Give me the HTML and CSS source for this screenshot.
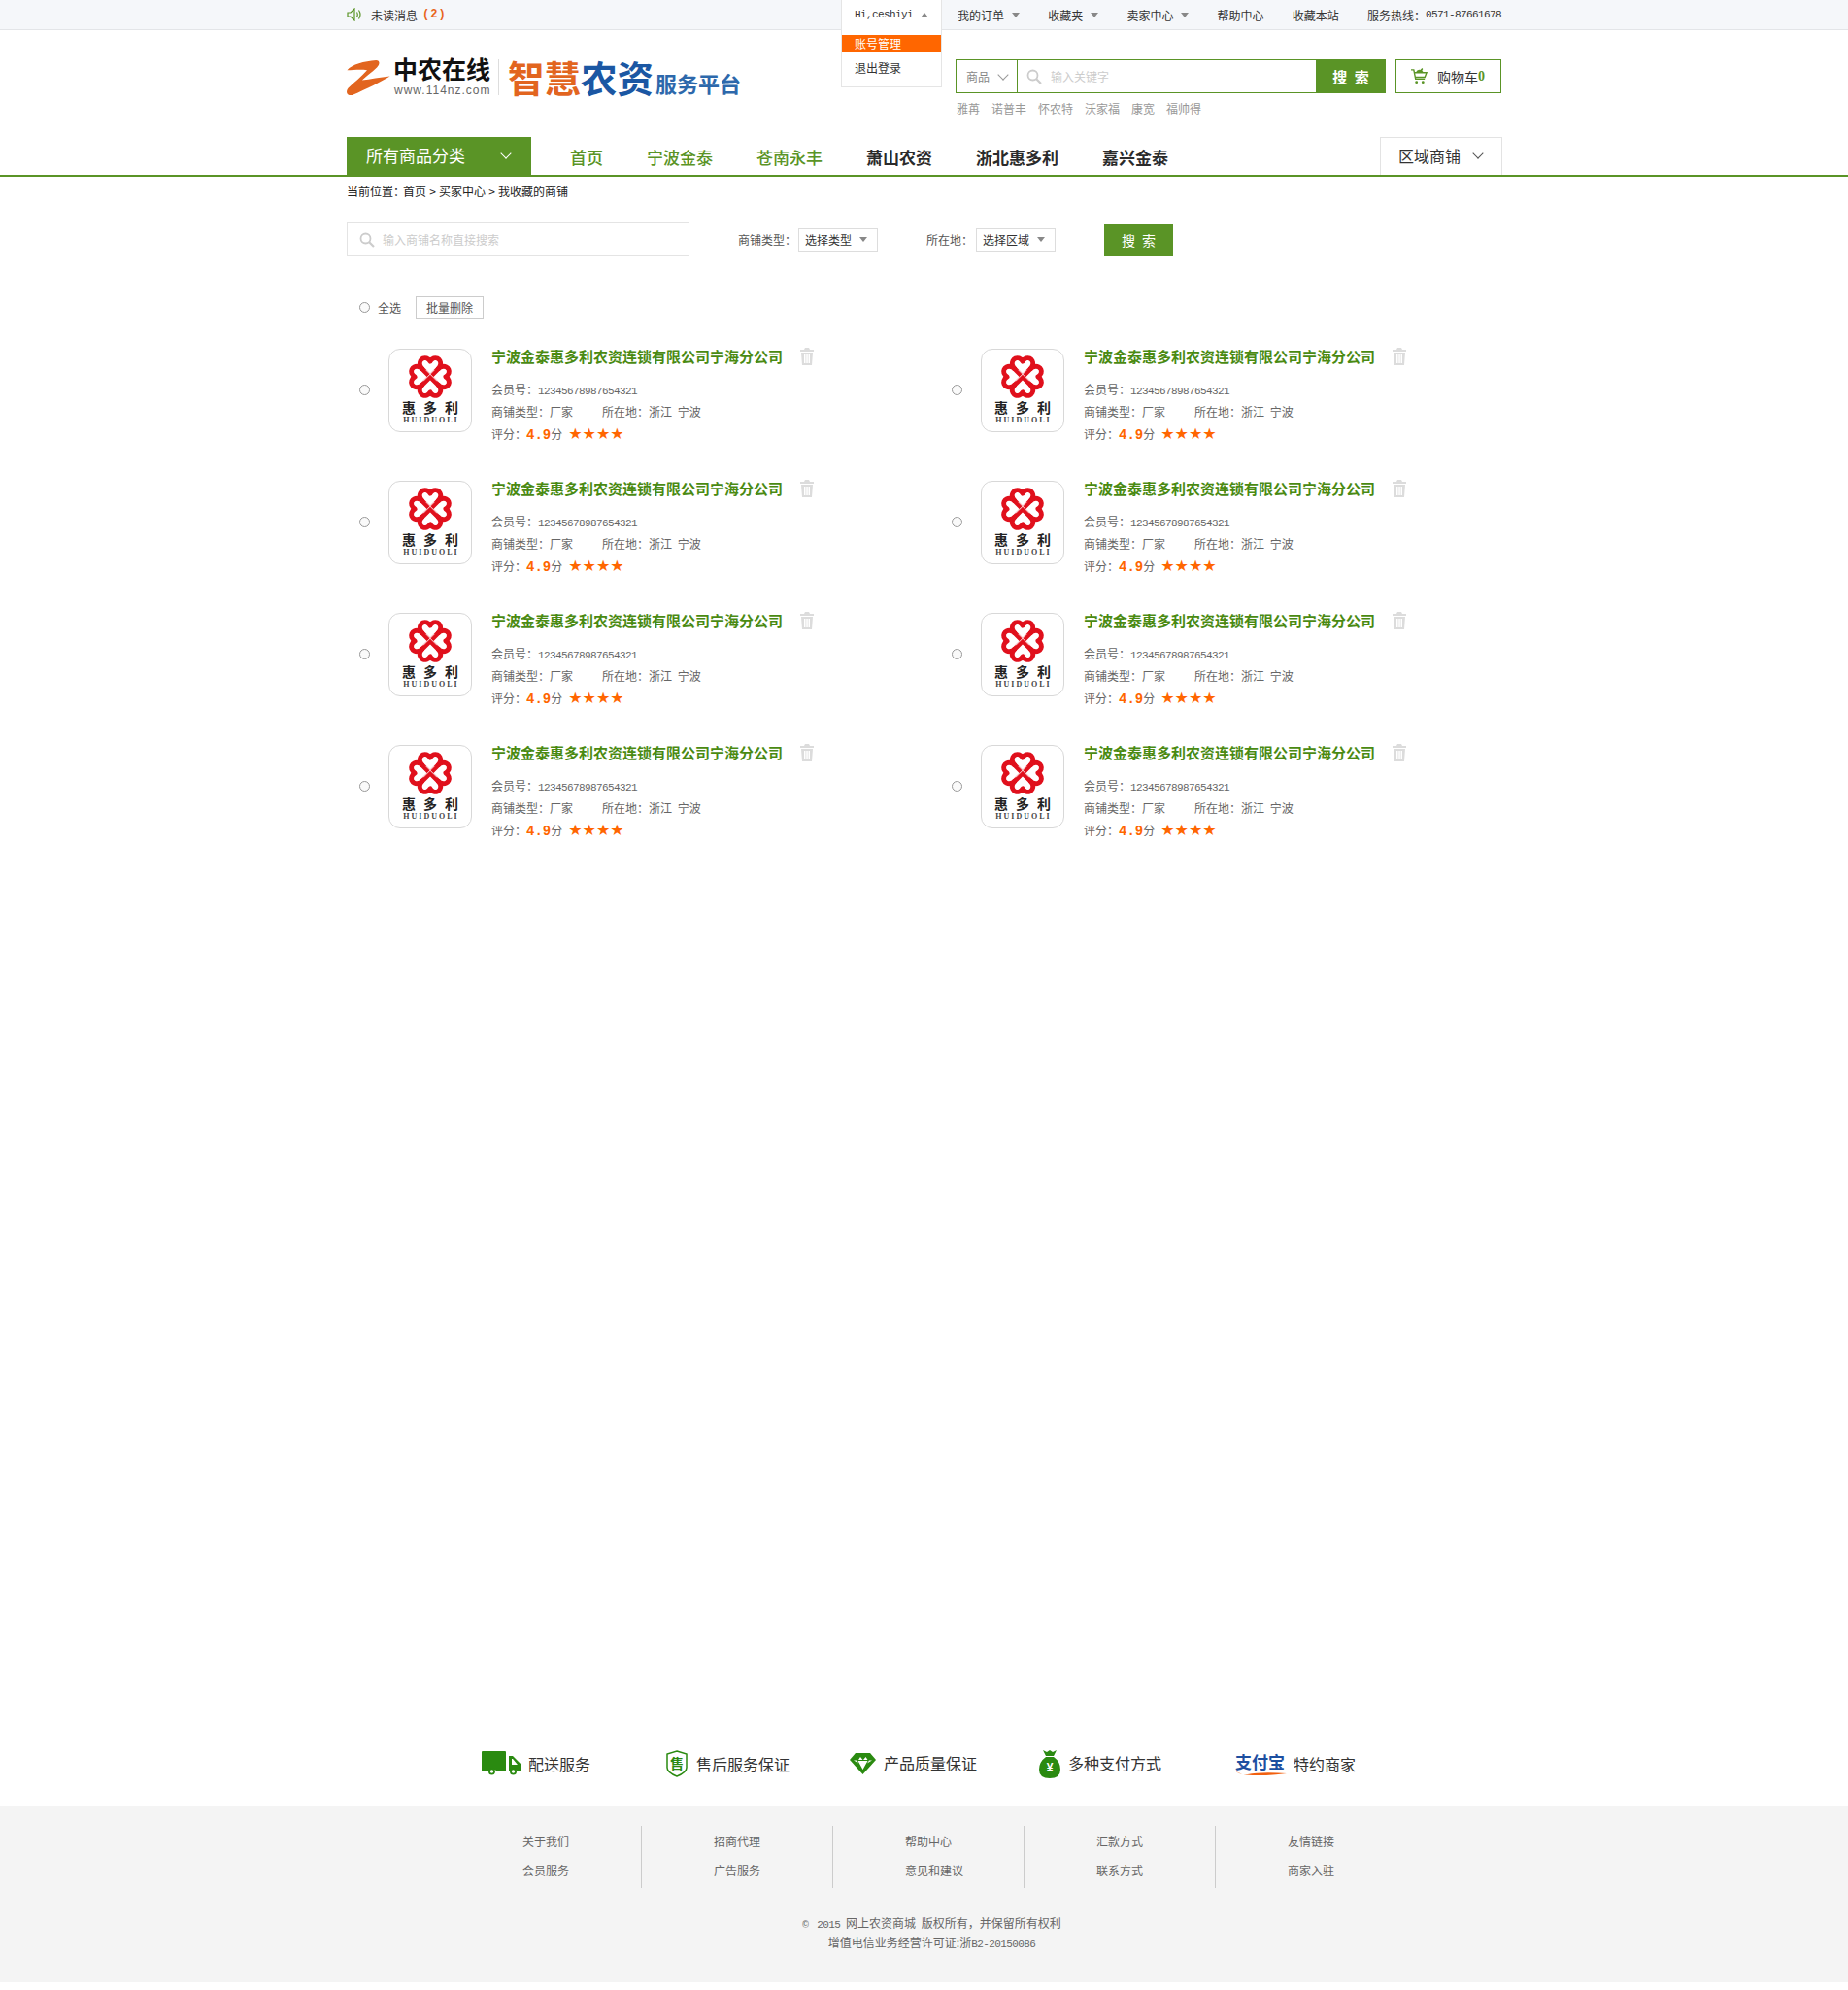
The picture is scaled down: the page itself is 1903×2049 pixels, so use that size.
FILE: index.html
```html
<!DOCTYPE html>
<html lang="zh-CN">
<head>
<meta charset="utf-8">
<title>我收藏的商铺</title>
<link rel="stylesheet" href="styles.css">
</head>
<body>
<svg class="sprite" aria-hidden="true">
  <symbol id="knot" viewBox="-21 -21 42 42">
    <g fill="none" stroke="#e0101c" stroke-width="4.400" stroke-linejoin="round">
      <path id="lobe" d="M-7 -7C-13 -13 -8 -19 -3.500 -17.500Q-1 -16.500 0 -14.500Q1 -16.500 3.500 -17.500C8 -19 13 -13 7 -7"/>
      <use href="#lobe" transform="rotate(90)"/>
      <use href="#lobe" transform="rotate(180)"/>
      <use href="#lobe" transform="rotate(270)"/>
      <path d="M-8 -8L8 8M8 -8L-8 8"/>
    </g>
    <path d="M-4 -6.500L6.500 4M4 -6.500L-6.500 4" stroke="#fff" stroke-width=".8"/>
  </symbol>
  <symbol id="trash" viewBox="0 0 14 18">
    <path fill="#dcdcdc" d="M5 0h4l1 2h4v2H0V2h4zM1 5h12l-1 13H2zM4 7v9h1.500V7zM6.300 7v9h1.500V7zM8.500 7v9H10V7z" fill-rule="evenodd"/>
  </symbol>
  <symbol id="glass" viewBox="0 0 16 16">
    <circle cx="6.500" cy="6.500" r="5" fill="none" stroke="#ccc" stroke-width="1.800"/>
    <path d="M10 10l5 5" stroke="#ccc" stroke-width="2.200"/>
  </symbol>
</svg>

<header class="topbar">
  <div class="wrap topbar-in">
    <div class="msg">
      <svg class="ico-speaker" viewBox="0 0 15 14"><path d="M1 5h3l4-4v12l-4-4H1zM10.500 4.500q1.500 2.500 0 5M12.500 2.500q3 4.500 0 9" fill="none" stroke="#5a9426" stroke-width="1.200"/></svg>
      <span>未读消息</span><b class="msg-count">(2)</b>
    </div>
    <div class="user">
      <div class="user-head"><span class="m">Hi,ceshiyi</span><i class="tri-up"></i></div>
      <ul class="user-menu">
        <li class="on">账号管理</li>
        <li>退出登录</li>
      </ul>
    </div>
    <nav class="toplinks">
      <span class="tl">我的订单<i class="tri"></i></span>
      <span class="tl">收藏夹<i class="tri"></i></span>
      <span class="tl">卖家中心<i class="tri"></i></span>
      <span class="tl">帮助中心</span>
      <span class="tl">收藏本站</span>
      <span class="tl">服务热线：<span class="m">0571-87661678</span></span>
    </nav>
  </div>
</header>

<div class="wrap head">
  <div class="brand">
    <svg class="ico-z" viewBox="0 0 46 36"><path fill="#e2651f" d="M3 11C8 5 20 2 32 1C36 1 36 5 33 8C28 13 22 17 18 21C26 20 36 18 46 17C38 22 22 30 8 36C3 37 1 33 4 29C10 23 17 18 23 11C16 10 9 11 3 11Z"/></svg>
    <div class="brand-zn">
      <strong>中农在线</strong>
      <span>www.114nz.com</span>
    </div>
    <div class="brand-slogan">
      <b class="or">智慧</b><b class="bl">农资</b><b class="sub">服务平台</b>
    </div>
  </div>
  <div class="searchbox">
    <div class="search-row">
      <div class="search">
        <div class="search-type">商品<i class="chev chev-gray"></i></div>
        <div class="search-input"><svg class="ico-glass"><use href="#glass"/></svg><span>输入关键字</span></div>
        <div class="search-btn">搜 索</div>
      </div>
      <div class="cart">
        <svg class="ico-cart" viewBox="0 0 18 18"><path d="M0 2h3l2 10h10M4 5h13l-2 5H5" fill="none" stroke="#5a9426" stroke-width="1.500"/><path d="M5 5q2-4 5-3l2-2 1 1-1 2 2 2z" fill="#5a9426"/><circle cx="6" cy="15.500" r="1.500" fill="#5a9426"/><circle cx="13" cy="15.500" r="1.500" fill="#5a9426"/></svg>
        <span>购物车</span><b class="cart-n">0</b>
      </div>
    </div>
    <div class="hot">
      <span>雅苒</span><span>诺普丰</span><span>怀农特</span><span>沃家福</span><span>康宽</span><span>福帅得</span>
    </div>
  </div>
</div>

<div class="navline">
  <div class="wrap nav">
    <div class="allcat">所有商品分类<i class="chev chev-white"></i></div>
    <ul class="navlist">
      <li class="g">首页</li>
      <li class="g">宁波金泰</li>
      <li class="g">苍南永丰</li>
      <li>萧山农资</li>
      <li>浙北惠多利</li>
      <li>嘉兴金泰</li>
    </ul>
    <div class="region">区域商铺<i class="chev chev-dark"></i></div>
  </div>
</div>

<main class="wrap main">
  <div class="crumb">当前位置：<span class="crumb-link">首页 &gt; 买家中心 &gt; 我收藏的商铺</span></div>

  <div class="filter">
    <div class="f-input"><svg class="ico-glass"><use href="#glass"/></svg><span>输入商铺名称直接搜索</span></div>
    <label class="f-label f-type">商铺类型：</label>
    <div class="f-select">选择类型<i class="tri"></i></div>
    <label class="f-label f-place">所在地：</label>
    <div class="f-select">选择区域<i class="tri"></i></div>
    <div class="f-btn">搜 索</div>
  </div>

  <div class="batch">
    <i class="radio"></i><span class="batch-all">全选</span><span class="batch-del">批量删除</span>
  </div>

  <div class="list">
    <article class="card">
      <i class="radio radio-card"></i>
      <div class="shoplogo"><svg class="knot"><use href="#knot"/></svg><b>惠多利</b><em>HUIDUOLI</em></div>
      <div class="info">
        <div class="title"><h3>宁波金泰惠多利农资连锁有限公司宁海分公司</h3><svg class="ico-trash"><use href="#trash"/></svg></div>
        <p>会员号：<span class="m">12345678987654321</span></p>
        <p><span class="col-type">商铺类型：厂家</span><span class="place">所在地：浙江 宁波</span></p>
        <p>评分：<b class="score">4.9</b>分<span class="stars">★★★★</span></p>
      </div>
    </article>
    <article class="card">
      <i class="radio radio-card"></i>
      <div class="shoplogo"><svg class="knot"><use href="#knot"/></svg><b>惠多利</b><em>HUIDUOLI</em></div>
      <div class="info">
        <div class="title"><h3>宁波金泰惠多利农资连锁有限公司宁海分公司</h3><svg class="ico-trash"><use href="#trash"/></svg></div>
        <p>会员号：<span class="m">12345678987654321</span></p>
        <p><span class="col-type">商铺类型：厂家</span><span class="place">所在地：浙江 宁波</span></p>
        <p>评分：<b class="score">4.9</b>分<span class="stars">★★★★</span></p>
      </div>
    </article>
    <article class="card">
      <i class="radio radio-card"></i>
      <div class="shoplogo"><svg class="knot"><use href="#knot"/></svg><b>惠多利</b><em>HUIDUOLI</em></div>
      <div class="info">
        <div class="title"><h3>宁波金泰惠多利农资连锁有限公司宁海分公司</h3><svg class="ico-trash"><use href="#trash"/></svg></div>
        <p>会员号：<span class="m">12345678987654321</span></p>
        <p><span class="col-type">商铺类型：厂家</span><span class="place">所在地：浙江 宁波</span></p>
        <p>评分：<b class="score">4.9</b>分<span class="stars">★★★★</span></p>
      </div>
    </article>
    <article class="card">
      <i class="radio radio-card"></i>
      <div class="shoplogo"><svg class="knot"><use href="#knot"/></svg><b>惠多利</b><em>HUIDUOLI</em></div>
      <div class="info">
        <div class="title"><h3>宁波金泰惠多利农资连锁有限公司宁海分公司</h3><svg class="ico-trash"><use href="#trash"/></svg></div>
        <p>会员号：<span class="m">12345678987654321</span></p>
        <p><span class="col-type">商铺类型：厂家</span><span class="place">所在地：浙江 宁波</span></p>
        <p>评分：<b class="score">4.9</b>分<span class="stars">★★★★</span></p>
      </div>
    </article>
    <article class="card">
      <i class="radio radio-card"></i>
      <div class="shoplogo"><svg class="knot"><use href="#knot"/></svg><b>惠多利</b><em>HUIDUOLI</em></div>
      <div class="info">
        <div class="title"><h3>宁波金泰惠多利农资连锁有限公司宁海分公司</h3><svg class="ico-trash"><use href="#trash"/></svg></div>
        <p>会员号：<span class="m">12345678987654321</span></p>
        <p><span class="col-type">商铺类型：厂家</span><span class="place">所在地：浙江 宁波</span></p>
        <p>评分：<b class="score">4.9</b>分<span class="stars">★★★★</span></p>
      </div>
    </article>
    <article class="card">
      <i class="radio radio-card"></i>
      <div class="shoplogo"><svg class="knot"><use href="#knot"/></svg><b>惠多利</b><em>HUIDUOLI</em></div>
      <div class="info">
        <div class="title"><h3>宁波金泰惠多利农资连锁有限公司宁海分公司</h3><svg class="ico-trash"><use href="#trash"/></svg></div>
        <p>会员号：<span class="m">12345678987654321</span></p>
        <p><span class="col-type">商铺类型：厂家</span><span class="place">所在地：浙江 宁波</span></p>
        <p>评分：<b class="score">4.9</b>分<span class="stars">★★★★</span></p>
      </div>
    </article>
    <article class="card">
      <i class="radio radio-card"></i>
      <div class="shoplogo"><svg class="knot"><use href="#knot"/></svg><b>惠多利</b><em>HUIDUOLI</em></div>
      <div class="info">
        <div class="title"><h3>宁波金泰惠多利农资连锁有限公司宁海分公司</h3><svg class="ico-trash"><use href="#trash"/></svg></div>
        <p>会员号：<span class="m">12345678987654321</span></p>
        <p><span class="col-type">商铺类型：厂家</span><span class="place">所在地：浙江 宁波</span></p>
        <p>评分：<b class="score">4.9</b>分<span class="stars">★★★★</span></p>
      </div>
    </article>
    <article class="card">
      <i class="radio radio-card"></i>
      <div class="shoplogo"><svg class="knot"><use href="#knot"/></svg><b>惠多利</b><em>HUIDUOLI</em></div>
      <div class="info">
        <div class="title"><h3>宁波金泰惠多利农资连锁有限公司宁海分公司</h3><svg class="ico-trash"><use href="#trash"/></svg></div>
        <p>会员号：<span class="m">12345678987654321</span></p>
        <p><span class="col-type">商铺类型：厂家</span><span class="place">所在地：浙江 宁波</span></p>
        <p>评分：<b class="score">4.9</b>分<span class="stars">★★★★</span></p>
      </div>
    </article>
  </div>
</main>

<section class="wrap services">
  <div class="svc">
    <svg class="ico-truck" viewBox="0 0 40 26"><path fill="#2a8a10" d="M1 0h23a1 1 0 0 1 1 1v20h-9a5.500 5.500 0 0 0-9 0H1a1 1 0 0 1-1-1V1a1 1 0 0 1 1-1zM28 5h4l8 8v8h-3a5.500 5.500 0 0 0-7-1l-2 1zM31 8v6h6l-5-6z" fill-rule="evenodd"/><circle cx="10.500" cy="21" r="3.500" fill="#2a8a10"/><circle cx="32.500" cy="21" r="3.500" fill="#2a8a10"/><circle cx="10.500" cy="21" r="1.700" fill="#fff"/><circle cx="32.500" cy="21" r="1.700" fill="#fff"/></svg>
    <span>配送服务</span>
  </div>
  <div class="svc">
    <div class="shield">
      <svg class="ico-shield" viewBox="0 0 22 28"><path d="M11 1l10 3v14q0 5-10 9Q1 23 1 18V4z" fill="#fff" stroke="#2a8a10" stroke-width="1.500"/></svg>
      <b>售</b>
    </div>
    <span>售后服务保证</span>
  </div>
  <div class="svc svc-dia">
    <svg class="ico-dia" viewBox="0 0 27 22"><path fill="#2a8a10" d="M6 0h15l6 7-13.500 15L0 7z"/><path fill="#fff" d="M4 7.500h3l2 3zM9 7l2-3 2.500 3zM14 7l2.500-3 2 3zM20 7.500h3l-5 3zM8.500 8h10l-5 9z"/></svg>
    <span>产品质量保证</span>
  </div>
  <div class="svc svc-bag">
    <div class="bag">
      <svg class="ico-bag" viewBox="0 0 22 29"><path fill="#2a8a10" d="M4 0l4 2 3-2 3 2 4-2-3 6H7zM7 7h8q7 5 7 13 0 9-11 9T0 20q0-8 7-13z"/></svg>
      <b>¥</b>
    </div>
    <span>多种支付方式</span>
  </div>
  <div class="svc svc-ali">
    <div class="alipay"><b>支付宝</b><svg class="ico-swoosh" viewBox="0 0 54 8"><path d="M0 3q4 5 13 4 14-3 41-1-22 3-36 2Q5 8 0 3z" fill="#f2600f"/></svg></div>
    <span>特约商家</span>
  </div>
</section>

<footer class="footer">
  <div class="cols">
    <div class="col"><a>关于我们</a><a>会员服务</a></div>
    <div class="col"><a>招商代理</a><a>广告服务</a></div>
    <div class="col"><a>帮助中心</a><a>意见和建议</a></div>
    <div class="col"><a>汇款方式</a><a>联系方式</a></div>
    <div class="col"><a>友情链接</a><a>商家入驻</a></div>
  </div>
  <div class="copy">
    <p><span class="m">© 2015</span> 网上农资商城 版权所有，并保留所有权利</p>
    <p>增值电信业务经营许可证:浙<span class="m">B2-20150086</span></p>
  </div>
</footer>
</body>
</html>
```

FILE: styles.css
```css
* { box-sizing: border-box; }
html, body { margin: 0; padding: 0; }
body {
  font-family: "Noto Sans CJK SC", "Liberation Sans", sans-serif;
  font-size: 12px;
  color: #333;
  background: #fff;
}
ul { list-style: none; margin: 0; padding: 0; }
p, h3 { margin: 0; }
i, em { font-style: normal; }
.sprite { position: absolute; width: 0; height: 0; overflow: hidden; }
.wrap { width: 1189px; margin-left: auto; margin-right: auto; }
.m { font-family: "Liberation Mono", monospace; font-size: 11px; letter-spacing: -0.6px; }

/* top bar */
.topbar { height: 31px; background: #f5f7fa; border-bottom: 1px solid #e3e5e8; }
.topbar-in { display: flex; height: 30px; }
.msg { display: flex; align-items: center; width: 509px; color: #333; }
.ico-speaker { width: 15px; height: 14px; margin-right: 10px; }
.msg-count { font-family: "Liberation Mono", monospace; font-size: 12px; letter-spacing: 1px; color: #e8641b; margin-left: 5px; }
.user { position: relative; width: 104px; height: 31px; background: #fff; border-left: 1px solid #e5e5e5; border-right: 1px solid #e5e5e5; z-index: 2; }
.user-head { display: flex; align-items: center; height: 30px; padding-left: 13px; }
.tri-up { width: 0; height: 0; margin-left: 8px; border: 4px solid transparent; border-top: 0; border-bottom: 5px solid #888; }
.user-menu { position: absolute; left: -1px; right: -1px; top: 31px; height: 59px; padding-top: 5px; background: #fff; border: 1px solid #e5e5e5; border-top: 0; }
.user-menu li { height: 18px; line-height: 18px; padding-left: 13px; margin-bottom: 7px; }
.user-menu .on { background: #ff6600; color: #fff; }
.toplinks { display: flex; flex: 1; justify-content: space-between; align-items: center; padding-left: 16px; height: 30px; }
.tl { display: flex; align-items: center; white-space: nowrap; }
.tri { width: 0; height: 0; margin-left: 8px; border: 4px solid transparent; border-bottom: 0; border-top: 5px solid #888; }

/* header */
.head { display: flex; justify-content: space-between; height: 110px; padding-top: 30px; }
.brand { display: flex; height: 37px; margin-left: -1px; }
.ico-z { width: 48px; height: 37px; margin: 0 -2px 0 -2px; }
.brand-zn { display: flex; flex-direction: column; margin-left: 2px; border-right: 1px solid #ddd; width: 112px; }
.brand-zn strong { font-size: 25px; line-height: 24px; color: #111; margin: -3px 0 0 3px; white-space: nowrap; }
.brand-zn span { font-family: "Liberation Sans", sans-serif; font-size: 12px; line-height: 12px; letter-spacing: 1px; color: #666; margin: 5px 0 0 4px; white-space: nowrap; }
.brand-slogan { display: flex; align-items: flex-end; margin: -1px 0 0 9px; height: 37px; white-space: nowrap; }
.brand-slogan b { line-height: 37px; }
.or { font-size: 37.500px; color: #e2651f; }
.bl { font-size: 37.500px; color: #1b57a3; }
.brand-slogan .sub { font-size: 22px; line-height: 24px; color: #2d68ab; margin-left: 2px; }

.searchbox { width: 562px; }
.search-row { display: flex; height: 35px; }
.search { display: flex; width: 443px; border: 1px solid #5a9426; }
.search-type { display: flex; align-items: center; width: 63px; padding-left: 10px; border-right: 1px solid #5a9426; color: #888; }
.search-input { display: flex; align-items: center; flex: 1; padding-left: 9px; color: #ccc; }
.ico-glass { width: 16px; height: 16px; margin-right: 9px; flex: none; }
.search-btn { width: 72px; margin: -1px -1px -1px 0; background: #5a9426; color: #fff; font-size: 15px; font-weight: bold; line-height: 35px; text-align: center; word-spacing: 4px; }
.cart { display: flex; align-items: center; width: 109px; margin-left: 10px; border: 1px solid #5a9426; padding-left: 15px; font-size: 14px; color: #333; }
.ico-cart { width: 17px; height: 17px; margin-right: 10px; }
.cart-n { font-family: "Liberation Serif", serif; font-size: 14px; color: #5a9426; }
.hot { display: flex; gap: 12px; margin: 6px 0 0 1px; line-height: 20px; color: #999; }
.chev { display: inline-block; width: 8px; height: 8px; border-right: 1.500px solid; border-bottom: 1.500px solid; transform: rotate(45deg); }
.chev-gray { color: #999; margin: -4px 0 0 10px; }
.chev-white { color: #fff; margin: -4px 0 0 38px; }
.chev-dark { color: #555; margin: -4px 0 0 14px; }

/* nav */
.navline { border-bottom: 2px solid #5a9426; height: 41px; }
.nav { display: flex; height: 39px; }
.allcat { display: flex; align-items: center; width: 190px; height: 40px; padding: 0 0 3px 20px; background: #5a9426; color: #fff; font-size: 17px; }
.navlist { display: flex; flex: 1; gap: 45px; padding-left: 40px; font-size: 17px; font-weight: bold; color: #2b2b2b; align-items: center; height: 40px; }
.navlist .g { color: #5a9426; font-weight: 500; }
.region { display: flex; align-items: center; width: 126px; height: 39px; padding: 0 0 2px 18px; margin-right: -1px; border: 1px solid #e3e3e3; border-bottom: 0; font-size: 16px; color: #333; }

/* main */
.main { height: 1598px; }
.crumb { height: 30px; line-height: 30px; color: #222; }
.crumb-link { margin-left: -2px; word-spacing: 0.5px; }
.filter { display: flex; align-items: center; height: 35px; margin-top: 17px; }
.f-input { display: flex; align-items: center; width: 353px; height: 35px; padding-left: 12px; border: 1px solid #e4e4e4; color: #ccc; }
.f-input .ico-glass { margin-right: 8px; }
.f-label { color: #555; }
.f-type { margin-left: 50px; width: 62px; }
.f-place { margin-left: 50px; width: 51px; }
.f-select { display: flex; align-items: center; width: 82px; height: 24px; padding-left: 6px; border: 1px solid #ddd; color: #333; }
.f-btn { width: 71px; height: 33px; margin-left: 50px; margin-top: 2px; background: #5a9426; color: #fff; font-size: 14px; line-height: 33px; text-align: center; word-spacing: 4px; }

.batch { display: flex; align-items: center; height: 23px; margin-top: 41px; padding-left: 13px; color: #555; }
.radio { display: block; width: 11px; height: 11px; border: 1px solid #999; border-radius: 50%; background: #fafafa; flex: none; }
.batch-all { margin-left: 8px; }
.batch-del { width: 70px; height: 23px; margin-left: 15px; border: 1px solid #ccc; line-height: 21px; text-align: center; }

.list { display: grid; grid-template-columns: 610px 1fr; row-gap: 36px; margin-top: 31px; padding-left: 13px; }
.card { display: flex; height: 100px; }
.radio-card { margin: 37px 19px 0 0; }
.shoplogo { display: flex; flex-direction: column; align-items: center; width: 86px; height: 86px; border: 1px solid #d8d8d8; border-radius: 12px; color: #222; }
.knot { width: 46px; height: 46px; margin-top: 5px; flex: none; }
.shoplogo b { font-size: 14px; line-height: 14px; letter-spacing: 8px; margin: 1px 0 0 8px; white-space: nowrap; }
.shoplogo em { font-family: "Liberation Serif", serif; font-size: 8px; font-weight: bold; line-height: 9px; letter-spacing: 2px; color: #444; margin: 2px 0 0 2px; }
.info { margin-left: 20px; color: #666; }
.title { display: flex; align-items: center; height: 18px; margin-bottom: 12px; }
.title h3 { width: 318px; margin-top: -2px; font-size: 15px; line-height: 18px; font-weight: bold; color: #4a8a12; white-space: nowrap; }
.ico-trash { width: 14px; height: 18px; margin-top: -2px; }
.info p { height: 23px; line-height: 23px; white-space: nowrap; }
.col-type { display: inline-block; width: 114px; }
.place { word-spacing: 3px; }
.score { font-family: "Liberation Mono", monospace; color: #ff6600; font-size: 14px; }
.stars { font-family: "DejaVu Sans", sans-serif; font-size: 16px; line-height: 16px; color: #ff6600; margin-left: 6px; }

/* services */
.services { display: grid; grid-template-columns: 190px 189px 195px 202px auto; height: 80px; padding: 0 0 8px 139px; align-items: center; }
.svc { display: flex; align-items: center; font-size: 16px; color: #333; white-space: nowrap; }
.ico-truck { width: 40px; height: 26px; margin-right: 8px; }
.shield { position: relative; width: 22px; height: 28px; margin-right: 9px; }
.ico-shield { display: block; width: 22px; height: 28px; }
.shield b { position: absolute; left: 4px; top: 4px; width: 14px; font-size: 14px; line-height: 18px; color: #2a8a10; }
.ico-dia { width: 27px; height: 22px; margin-right: 8px; }
.svc-dia span, .svc-bag span { margin-top: -2px; }
.bag { position: relative; width: 22px; height: 29px; margin-right: 8px; }
.ico-bag { display: block; width: 22px; height: 29px; }
.bag b { position: absolute; left: 0; top: 11px; width: 22px; text-align: center; font-family: "Liberation Sans", sans-serif; font-size: 12px; line-height: 14px; color: #fff; }
.alipay { position: relative; width: 53px; height: 24px; margin-right: 7px; }
.alipay b { display: block; font-size: 17px; line-height: 20px; color: #1d4fa0; white-space: nowrap; }
.ico-swoosh { position: absolute; left: 0; bottom: 0; width: 53px; height: 8px; }

/* footer */
.footer { height: 181px; margin-bottom: 8px; padding-top: 20px; background: #f4f4f4; color: #666; }
.cols { display: flex; width: 985px; margin-left: 464px; }
.col { display: flex; flex-direction: column; align-items: flex-start; width: 197px; height: 64px; padding: 1px 0 0 74px; border-right: 1px solid #ccc; }
.col:last-child { border-right: 0; }
.col a { line-height: 30px; white-space: nowrap; }
.copy { margin-top: 26px; padding-left: 16px; text-align: center; word-spacing: 3px; }
.copy p { height: 20px; line-height: 20px; }
```
